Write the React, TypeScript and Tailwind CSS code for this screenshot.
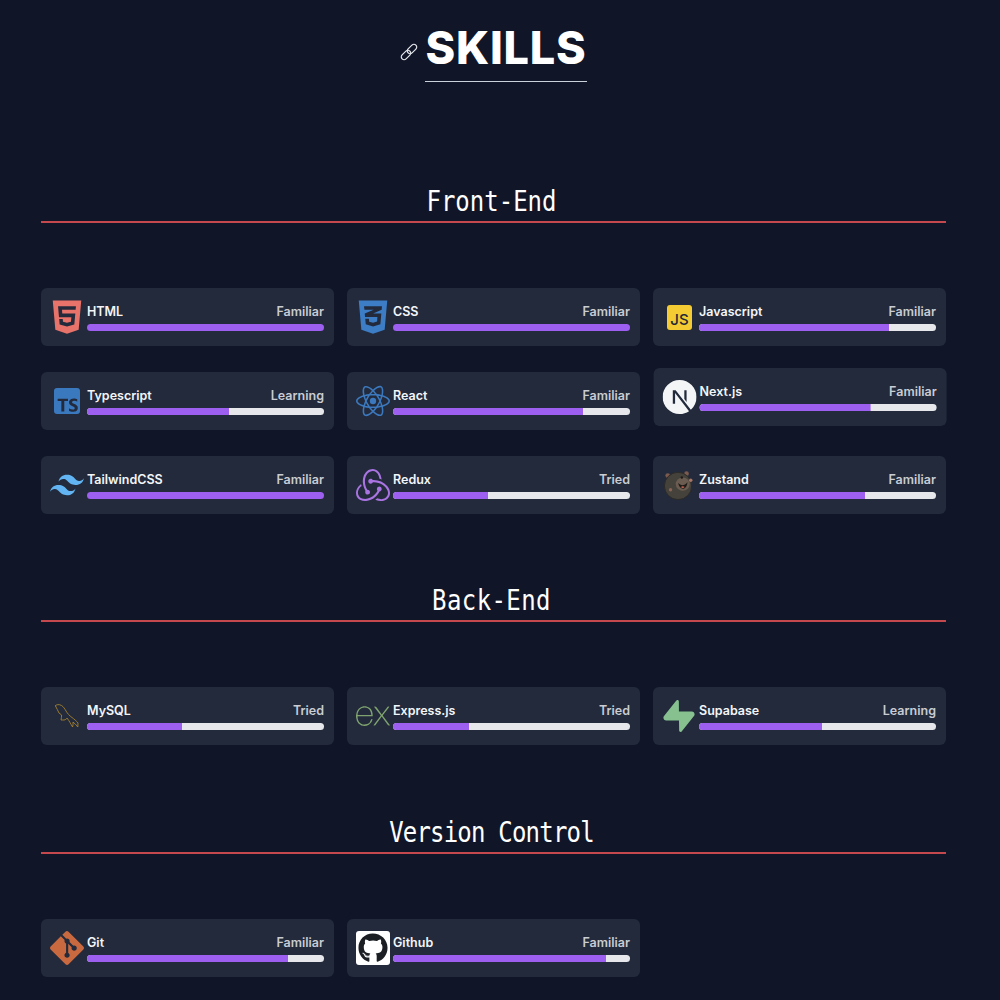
import React from "react";
import { FaCss3Alt, FaGithub, FaHtml5 } from "react-icons/fa";
import {
  SiExpress,
  SiGit,
  SiNextdotjs,
  SiReact,
  SiRedux,
  SiSupabase,
  SiTailwindcss,
  SiTypescript,
} from "react-icons/si";

interface Skill {
  name: string;
  level: string;
  value: number;
  icon: React.ReactNode;
  raised?: boolean;
}

const ChainIcon = () => (
  <svg viewBox="0 0 18 18" className="mt-[1px] h-[18px] w-[18px]" fill="none" stroke="#e5e7eb" strokeWidth="1.2">
    <rect x="-2.800" y="-5.500" width="5.600" height="11" rx="2.800" transform="translate(6 12) rotate(45)" />
    <rect x="-2.800" y="-5.500" width="5.600" height="11" rx="2.800" transform="translate(12 6) rotate(45)" />
  </svg>
);

const MysqlIcon = () => (
  <svg viewBox="0 0 26 26" className="h-[26px] w-[26px]" fill="none" stroke="#a5812f" strokeWidth="0.9" strokeLinejoin="round">
    <path d="M1 3c1.500-1.500 4-2 6.500-.5 2 1.200 3.200 3.200 4.500 5.500 1.500 2.500 3.500 4.800 6 6.500 2 1.500 4.500 3.500 6 5.500l-.2 4c-1.500-1.800-3-3.800-4.800-5 .2 1.800 0 3.500-.4 5-1.800-2.800-3.200-6-5.600-9-.5 1-1.500 1.800-3 2-1.200 0-2.200 0-3 0 .4-1.800.6-3.500.6-5l-2.600-2c-1.200-2.200-2-4.500-3.500-7z" />
  </svg>
);

const BearIcon = () => (
  <svg viewBox="0 0 34 34" className="h-[32px] w-[32px]">
    <circle cx="5" cy="7" r="2.500" fill="#7c5a4e" />
    <circle cx="25" cy="5" r="2.500" fill="#7c5a4e" />
    <circle cx="16" cy="18" r="14.500" fill="#45423c" stroke="#2c2a27" strokeWidth="1" />
    <ellipse cx="21" cy="16" rx="7.500" ry="7" fill="#6a5c50" />
    <path d="M16 15c3 3 7 3 10-1-.5 5-3 7-5 7s-4-2-5-6z" fill="#1d1a18" />
    <path d="M19 19c1-1 3-1 4 0-1 1.500-3 1.500-4 0z" fill="#c4614f" />
    <circle cx="20" cy="9" r="1.300" fill="#1d1a18" />
    <circle cx="29.500" cy="12" r="1.800" fill="#a87564" />
    <circle cx="8" cy="22" r="1.800" fill="#8a6355" />
  </svg>
);

const frontEnd: Skill[] = [
  { name: "HTML", level: "Familiar", value: 100, icon: <FaHtml5 size={38} color="#e8736a" /> },
  { name: "CSS", level: "Familiar", value: 100, icon: <FaCss3Alt size={38} color="#3c7dc6" /> },
  {
    name: "Javascript",
    level: "Familiar",
    value: 80,
    icon: (
      <span className="ml-px flex h-[25px] w-[25px] items-end justify-center rounded-[3px] bg-[#f5cb34] text-[15px] font-medium leading-[20px] text-[#222839]">
        JS
      </span>
    ),
  },
  {
    name: "Typescript",
    level: "Learning",
    value: 60,
    icon: (
      <span className="overflow-hidden rounded-[3px]">
        <SiTypescript size={26} color="#3b79bf" />
      </span>
    ),
  },
  { name: "React", level: "Familiar", value: 80, icon: <SiReact size={34} color="#3b78bd" /> },
  { name: "Next.js", level: "Familiar", value: 72, icon: <SiNextdotjs size={34} color="#f4f5f7" />, raised: true },
  { name: "TailwindCSS", level: "Familiar", value: 100, icon: <SiTailwindcss size={34} color="#62b5f2" /> },
  { name: "Redux", level: "Tried", value: 40, icon: <SiRedux size={34} color="#a974e2" /> },
  { name: "Zustand", level: "Familiar", value: 70, icon: <BearIcon /> },
];

const backEnd: Skill[] = [
  { name: "MySQL", level: "Tried", value: 40, icon: <MysqlIcon /> },
  { name: "Express.js", level: "Tried", value: 32, icon: <SiExpress size={34} color="#7fa26f" /> },
  { name: "Supabase", level: "Learning", value: 52, icon: <SiSupabase size={32} color="#86c18f" /> },
];

const versionControl: Skill[] = [
  { name: "Git", level: "Familiar", value: 85, icon: <SiGit size={34} color="#c9693f" /> },
  {
    name: "Github",
    level: "Familiar",
    value: 90,
    icon: (
      <span className="flex h-[34px] w-[34px] shrink-0 items-center justify-center rounded-[3px] bg-white">
        <FaGithub size={30} color="#1b1f24" />
      </span>
    ),
  },
];

const SkillCard = ({ skill }: { skill: Skill }) => (
  <div
    className={`flex h-[58px] items-center gap-[3px] rounded-md bg-[#222a3b] pl-[9px] pr-[10px] ${
      skill.raised ? "-translate-y-1 translate-x-[0.6px]" : ""
    }`}
  >
    <div className="flex h-[34px] w-[34px] shrink-0 items-center justify-center">{skill.icon}</div>
    <div className="min-w-0 flex-1">
      <div className="mb-[3px] flex h-[18px] items-center justify-between text-[12.5px] font-semibold leading-4">
        <span className="text-[#f3f5f9]">{skill.name}</span>
        <span className="text-[#c9ccd3]">{skill.level}</span>
      </div>
      <div className="h-[7px] overflow-hidden rounded-sm bg-[#e5e7eb]">
        <div className="h-full bg-[#9d5ff0]" style={{ width: `${skill.value}%` }} />
      </div>
    </div>
  </div>
);

const Section = ({
  title,
  skills,
  className,
  titleClass,
}: {
  title: string;
  skills: Skill[];
  className: string;
  titleClass: string;
}) => (
  <section className={className}>
    <h2 className="border-b-2 border-[#c5484f] pr-1 text-center font-['DejaVu_Sans_Mono',monospace] text-[24px] leading-[33px] text-white">
      <span className={`inline-block origin-bottom scale-y-[1.15] ${titleClass}`}>{title}</span>
    </h2>
    <div className="mt-[65px] grid grid-cols-3 gap-x-[13px] gap-y-[26px]">
      {skills.map((skill) => (
        <SkillCard key={skill.name} skill={skill} />
      ))}
    </div>
  </section>
);

export default function App() {
  return (
    <div className="h-[1000px] overflow-hidden bg-[#101628] pl-[41px] pr-[54px] font-['Inter',sans-serif]">
      <header className="flex justify-center pt-5">
        <div className="flex items-center gap-[7px]">
          <ChainIcon />
          <h1 className="border-b border-[#cbd0da] pb-[6px] text-[45px] font-extrabold leading-[55px] tracking-[0.8px] text-white">
            SKILLS
          </h1>
        </div>
      </header>
      <Section title="Front-End" skills={frontEnd} className="mt-[106px]" titleClass="" />
      <Section title="Back-End" skills={backEnd} className="mt-[73px]" titleClass="tracking-[0.4px]" />
      <Section title="Version Control" skills={versionControl} className="mt-[74px]" titleClass="tracking-[-0.8px]" />
    </div>
  );
}
